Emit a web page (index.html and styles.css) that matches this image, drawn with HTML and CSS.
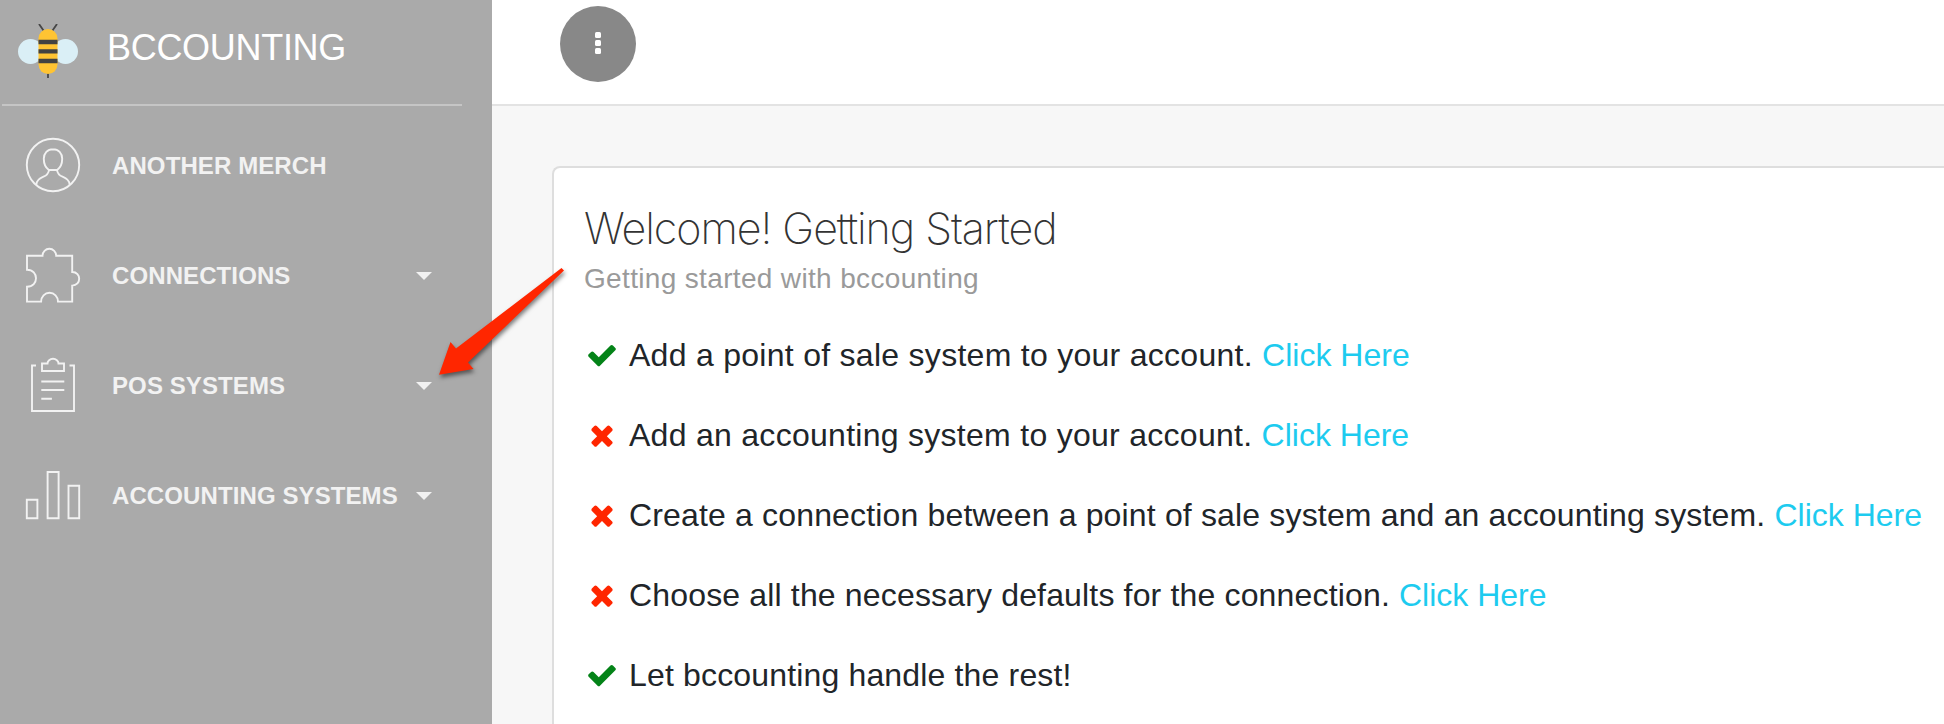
FILE: index.html
```html
<!DOCTYPE html>
<html lang="en">
<head>
  <meta charset="UTF-8">
  <meta name="viewport" content="width=device-width, initial-scale=1.0">
  <title>Bccounting - Getting Started</title>
  <link rel="stylesheet" href="styles.css">
</head>
<body>
  <svg class="defs" width="0" height="0">
    <symbol id="check" viewBox="0 0 1792 1792">
      <path d="M1671 566q0 40-28 68l-724 724-136 136q-28 28-68 28t-68-28l-136-136-362-362q-28-28-28-68t28-68l136-136q28-28 68-28t68 28l294 295 656-657q28-28 68-28t68 28l136 136q28 28 28 68z"/>
    </symbol>
    <symbol id="times" viewBox="0 0 1792 1792">
      <path d="M1490 1322q0 40-28 68l-136 136q-28 28-68 28t-68-28l-294-294-294 294q-28 28-68 28t-68-28l-136-136q-28-28-28-68t28-68l294-294-294-294q-28-28-28-68t28-68l136-136q28-28 68-28t68 28l294 294 294-294q28-28 68-28t68 28l136 136q28 28 28 68t-28 68l-294 294 294 294q28 28 28 68z"/>
    </symbol>
  </svg>

  <div class="wrapper">
    <aside class="sidebar">
      <div class="logo">
        <svg class="bee" viewBox="0 0 60 54" width="60" height="54">
          <circle cx="12.5" cy="27.5" r="12.5" fill="#daeff6"/>
          <circle cx="47.5" cy="27.5" r="12.5" fill="#daeff6"/>
          <path d="M21 0l4.5 6.5M39 0l-4.5 6.5M30 49v5" stroke="#464646" stroke-width="1.8"/>
          <rect x="20.5" y="5" width="19" height="45" rx="9.5" fill="#ffc433"/>
          <path d="M20.5 18h19M20.5 27.4h19M20.5 37h19" stroke="#424242" stroke-width="4.4"/>
        </svg>
        <span class="brand">BCCOUNTING</span>
      </div>
      <ul class="nav">
        <li>
          <svg class="icon" viewBox="0 0 54 54">
            <circle cx="27" cy="27" r="26.2"/>
            <path d="M27 11.200c-5.500 0-9.200 3.800-9.200 9.600 0 5.500 2 9 5 11.200h8.400c3-2.200 5-5.700 5-11.200 0-5.800-3.700-9.600-9.200-9.600z"/>
            <path d="M23 32c-.5 4-2.500 5.500-5.500 6.700-4 1.600-7 3.300-7.200 8.100M31 32c.5 4 2.500 5.500 5.500 6.700 4 1.600 7 3.300 7.200 8.100"/>
          </svg>
          <a href="#">ANOTHER MERCH</a>
        </li>
        <li>
          <svg class="icon" viewBox="0 0 54 54">
            <path d="M1 7.700h15.500a6.850 6.900 0 0 1 13.700 0H46.200V24c9.300 0 9.300 13.600 0 13.600v16H32a8.450 8.900 0 0 0-16.900 0H1V38.800c12 0 12-17 0-17z"/>
          </svg>
          <a href="#">CONNECTIONS</a>
          <b class="caret"></b>
        </li>
        <li>
          <svg class="icon" viewBox="0 0 54 54">
            <path d="M10 7.500H6v45.500h42V7.500h-4.500"/>
            <path d="M16 13V5.500h5.500a5.500 4.700 0 0 1 11 0H38V13z"/>
            <path d="M15.300 23.500h23M15.300 32h23M15.300 40.800h10.600"/>
          </svg>
          <a href="#">POS SYSTEMS</a>
          <b class="caret"></b>
        </li>
        <li>
          <svg class="icon" viewBox="0 0 54 54">
            <path d="M.8 31.700h10.600v18.500H.8zM21.600 4h11v46.200h-11zM42.500 17.800h10.700v32.400H42.500z"/>
          </svg>
          <a href="#">ACCOUNTING SYSTEMS</a>
          <b class="caret"></b>
        </li>
      </ul>
    </aside>

    <div class="main-panel">
      <header class="navbar">
        <button class="menu-btn" aria-label="Menu"><i></i><i></i><i></i></button>
      </header>
      <main class="content">
        <div class="card">
          <h4 class="title">Welcome! Getting Started</h4>
          <p class="category">Getting started with bccounting</p>
          <ul class="steps">
            <li><svg class="done"><use href="#check"/></svg><span>Add a point of sale system to your account. <a href="#">Click Here</a></span></li>
            <li><svg class="todo"><use href="#times"/></svg><span>Add an accounting system to your account. <a href="#">Click Here</a></span></li>
            <li><svg class="todo"><use href="#times"/></svg><span>Create a connection between a point of sale system and an accounting system. <a href="#">Click Here</a></span></li>
            <li><svg class="todo"><use href="#times"/></svg><span>Choose all the necessary defaults for the connection. <a href="#">Click Here</a></span></li>
            <li><svg class="done"><use href="#check"/></svg><span>Let bccounting handle the rest!</span></li>
          </ul>
        </div>
      </main>
    </div>
  </div>

  <!-- pointer to the POS systems menu -->
  <svg class="pointer" viewBox="0 0 140 120" width="140" height="120">
    <path d="M4 109.700l11.500-32.700 5.500 6.500L126.500 3l2.500 2.500L33 97.500l5.500 6.500z"/>
  </svg>
</body>
</html>
```

FILE: styles.css
```css
* {
  box-sizing: border-box;
}
body {
  margin: 0;
  font-family: "Helvetica Neue", "Liberation Sans", Arial, sans-serif;
  background: #f7f7f7;
  color: #212529;
}
ul {
  list-style: none;
  margin: 0;
  padding: 0;
}
a {
  text-decoration: none;
}
.defs {
  position: absolute;
}
.wrapper {
  display: flex;
  height: 100vh;
}

/* sidebar */
.sidebar {
  flex: 0 0 492px;
  background: #aaa;
}
.logo {
  display: flex;
  align-items: center;
  height: 106px;
  margin: 0 30px 0 2px;
  padding: 0 0 2px 16px;
  border-bottom: 2px solid #c5c5c5;
}
.brand {
  margin: 0 0 6px 29px;
  font-size: 36px;
  line-height: 40px;
  letter-spacing: -0.3px;
  color: #fff;
}
.nav {
  padding-top: 4px;
}
.nav li {
  display: flex;
  align-items: center;
  height: 110px;
  padding: 0 60px 0 26px;
}
.nav a {
  margin: 2px 0 0 32px;
  font-size: 24px;
  font-weight: bold;
  line-height: 30px;
  letter-spacing: 0.1px;
  color: #f2f2f2;
  white-space: nowrap;
}
.icon {
  width: 54px;
  height: 54px;
  overflow: visible;
  fill: none;
  stroke: #f2f2f2;
  stroke-width: 1.9;
}
.caret {
  margin: 2px 0 0 auto;
  border: 8px solid transparent;
  border-top-color: #f2f2f2;
  border-bottom: 0;
}

/* main panel */
.main-panel {
  display: flex;
  flex-direction: column;
  flex: 1;
  min-width: 0;
}
.navbar {
  flex: 0 0 106px;
  padding: 6px 68px;
  background: #fff;
  border-bottom: 2px solid #e3e3e3;
}
.menu-btn {
  display: flex;
  flex-direction: column;
  align-items: center;
  justify-content: center;
  gap: 2px;
  width: 76px;
  height: 76px;
  padding: 0 0 2px;
  border: 0;
  border-radius: 50%;
  background: #888;
}
.menu-btn i {
  width: 6px;
  height: 6px;
  border-radius: 1.5px;
  background: #fff;
}
.content {
  display: flex;
  flex: 1;
  padding: 60px 0 0 60px;
}
.card {
  flex: 1;
  min-width: 0;
  padding: 34px 0 0 30px;
  background: #fff;
  border: solid #dedede;
  border-width: 2px 0 0 2px;
  border-radius: 8px 0 0 0;
}
.title {
  margin: 0;
  font-family: Inter, "Liberation Sans", sans-serif;
  font-weight: 200;
  font-size: 43px;
  line-height: 52px;
  letter-spacing: -1.05px;
  color: #333;
}
.category {
  margin: 5px 0 0;
  font-size: 28px;
  line-height: 40px;
  letter-spacing: 0.34px;
  color: #9a9a9a;
}
.steps {
  margin-top: 16px;
  padding-left: 2px;
}
.steps li {
  display: flex;
  align-items: center;
  height: 80px;
  font-size: 32px;
  letter-spacing: 0.16px;
  white-space: nowrap;
}
.steps li:nth-child(-n+2) {
  letter-spacing: 0.28px;
}
.steps svg {
  width: 32px;
  height: 32px;
  margin: 0 11px 1px 0;
}
.steps a {
  color: #1dcbef;
  letter-spacing: 0;
}
.done {
  fill: #048318;
}
.todo {
  fill: #ff2600;
}

.pointer {
  position: absolute;
  left: 435px;
  top: 265px;
  overflow: visible;
  fill: #ff2600;
  filter: drop-shadow(1px 3px 2px rgba(0, 0, 0, 0.5));
}
```
